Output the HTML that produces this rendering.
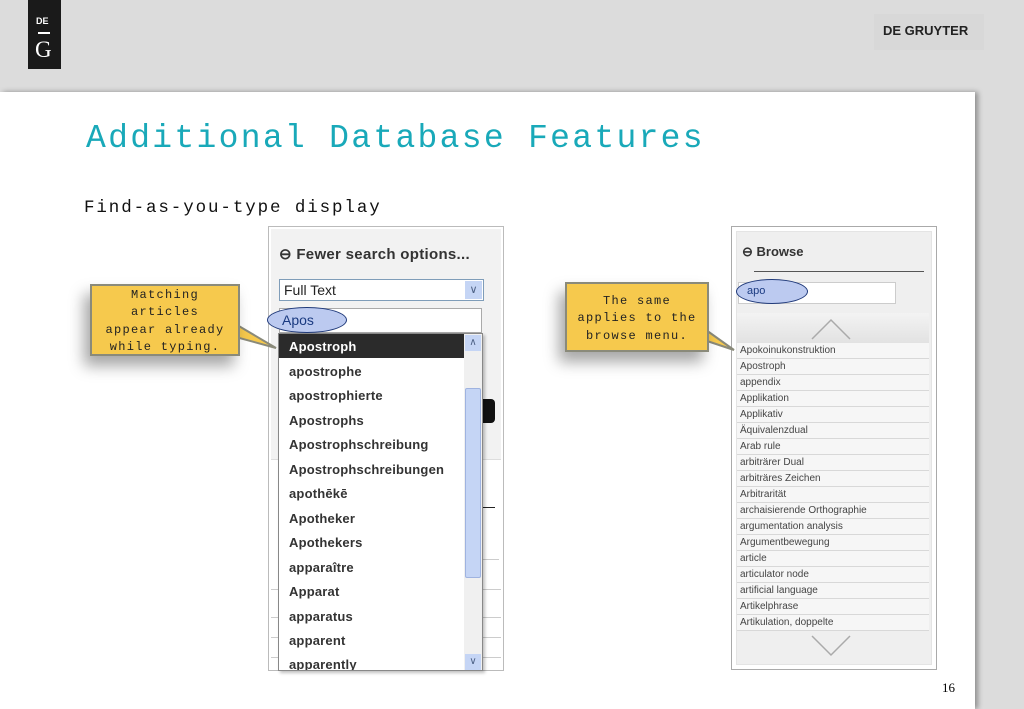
<!DOCTYPE html>
<html><head><meta charset="utf-8"><style>
*{margin:0;padding:0;box-sizing:border-box}
body{width:1024px;height:709px;background:#dcdcdc;position:relative;overflow:hidden;font-family:"Liberation Sans",sans-serif}
.abs{position:absolute}
.mono{font-family:"Liberation Mono","DejaVu Sans Mono",monospace}
.row{position:absolute;left:10px;font-weight:bold;font-size:13px;color:#333;letter-spacing:0.2px}
.br{position:absolute;left:0;width:192px;height:16px;border-bottom:1px solid #d8d8d8;font-size:10px;color:#444;padding-left:3px;line-height:15px;background:#f6f6f6}
.call{position:absolute;background:#f6c94d;border:2px solid #8a8a7a;font-size:12px;text-align:center;line-height:17.3px;color:#222;letter-spacing:1.3px;box-shadow:-6px 10px 14px rgba(0,0,0,.35)}
</style></head><body>
<div class="abs" style="left:28px;top:0;width:33px;height:69px;background:#1a1a1a;color:#fff">
<div style="position:absolute;left:8px;top:16px;font-size:9px;font-weight:bold">DE</div>
<div style="position:absolute;left:10px;top:32px;width:12px;height:2px;background:#fff"></div>
<div style="position:absolute;left:7px;top:37px;font-family:'Liberation Serif',serif;font-size:23px">G</div>
</div>
<div class="abs" style="left:874px;top:14px;width:110px;height:36px;background:#d8d8d8;font-weight:bold;font-size:13px;color:#222;line-height:34px;padding-left:9px">DE GRUYTER</div>
<div class="abs" style="left:0;top:92px;width:975px;height:617px;background:#fff;box-shadow:3px 0 5px rgba(0,0,0,.35)"></div>
<div class="abs mono" style="left:86px;top:120px;font-size:33px;color:#19a9b9;letter-spacing:2.3px">Additional Database Features</div>
<div class="abs mono" style="left:84px;top:198px;font-size:17.5px;color:#111;letter-spacing:1.9px">Find-as-you-type display</div>
<div class="abs" style="left:942px;top:680px;font-size:13px;font-family:'Liberation Serif',serif">16</div>

<!-- left screenshot -->
<div class="abs" style="left:268px;top:226px;width:236px;height:445px;border:1px solid #bbb;background:#fff">
<div class="abs" style="left:2px;top:2px;width:230px;height:230px;background:#f2f2f2"></div>
<div class="abs" style="left:10px;top:18px;font-size:15px;font-weight:bold;color:#333;letter-spacing:0.3px">⊖ Fewer search options...</div>
<div class="abs" style="left:10px;top:52px;width:205px;height:22px;border:1px solid #7f9db9;background:#fff;font-size:14px;padding:2px 4px;color:#222">Full Text
<div class="abs" style="right:1px;top:1px;width:17px;height:18px;background:#c5d5f5;color:#4d6185;font-size:11px;text-align:center;line-height:18px">&#x2228;</div></div>
<div class="abs" style="left:10px;top:81px;width:203px;height:25px;border:1px solid #aaa;background:#fff"></div>
<div class="abs" style="left:-2px;top:80px;width:80px;height:26px;border:1.5px solid #203a7a;border-radius:50%;background:#bccaf0;font-size:14px;color:#1a3a80;padding:4px 14px">Apos</div>
<div class="abs" style="left:200px;top:172px;width:26px;height:24px;background:#111;border-radius:4px"></div>
<div class="abs" style="left:2px;top:232px;width:230px;height:1px;background:#ddd"></div>
<div class="abs" style="left:200px;top:280px;width:26px;height:1px;background:#222"></div>
<div class="abs" style="left:200px;top:332px;width:30px;height:1px;background:#ccc"></div>
<div class="abs" style="left:2px;top:362px;width:230px;height:1px;background:#ccc"></div>
<div class="abs" style="left:2px;top:390px;width:230px;height:1px;background:#ccc"></div>
<div class="abs" style="left:2px;top:410px;width:230px;height:1px;background:#ccc"></div>
<div class="abs" style="left:2px;top:430px;width:230px;height:1px;background:#ccc"></div>
<div class="abs" style="left:9px;top:106px;width:205px;height:338px;background:#fff;border:1px solid #888;box-shadow:2px 2px 3px rgba(0,0,0,.25);overflow:hidden">
<div class="abs" style="left:0;top:0;width:185px;height:24px;background:#2b2b2b"></div>
<div class="row" style="top:5px;color:#fff">Apostroph</div>
<div class="row" style="top:30px">apostrophe</div>
<div class="row" style="top:54px">apostrophierte</div>
<div class="row" style="top:79px">Apostrophs</div>
<div class="row" style="top:103px">Apostrophschreibung</div>
<div class="row" style="top:128px">Apostrophschreibungen</div>
<div class="row" style="top:152px">apothēkē</div>
<div class="row" style="top:177px">Apotheker</div>
<div class="row" style="top:201px">Apothekers</div>
<div class="row" style="top:226px">apparaître</div>
<div class="row" style="top:250px">Apparat</div>
<div class="row" style="top:275px">apparatus</div>
<div class="row" style="top:299px">apparent</div>
<div class="row" style="top:323px">apparently</div>
<div class="abs" style="left:185px;top:0;width:18px;height:338px;background:#f0f0f0"></div>
<div class="abs" style="left:186px;top:1px;width:16px;height:16px;background:#c5d5f5;font-size:10px;color:#4d6185;text-align:center;line-height:16px">&#x2227;</div>
<div class="abs" style="left:186px;top:54px;width:16px;height:190px;background:#c5d5f5;border:1px solid #9fb3e0;border-radius:2px"></div>
<div class="abs" style="left:186px;top:320px;width:16px;height:16px;background:#c5d5f5;font-size:10px;color:#4d6185;text-align:center;line-height:16px">&#x2228;</div>
</div>
</div>

<!-- right screenshot -->
<div class="abs" style="left:731px;top:226px;width:206px;height:444px;border:1px solid #aaa;background:#fff">
<div class="abs" style="left:4px;top:4px;width:196px;height:434px;background:#efefef;border:1px solid #e4e4e4"></div>
<div class="abs" style="left:10px;top:17px;font-size:13px;font-weight:bold;color:#333">⊖ Browse</div>
<div class="abs" style="left:22px;top:44px;width:170px;height:1px;background:#555"></div>
<div class="abs" style="left:6px;top:55px;width:158px;height:22px;background:#fff;border:1px solid #ccc"></div>
<div class="abs" style="left:4px;top:52px;width:72px;height:25px;border:1.5px solid #203a7a;border-radius:50%;background:#bccaf0;font-size:11px;color:#1a3a80;padding:5px 10px">apo</div>
<div class="abs" style="left:5px;top:86px;width:192px;height:30px;background:linear-gradient(#f3f3f3,#e2e2e2)"></div>
<svg class="abs" style="left:78px;top:90px" width="42" height="24"><path d="M2 22 L21 3 L40 22" fill="none" stroke="#aaa" stroke-width="1.5"/></svg>
<div class="abs" style="left:5px;top:116px;width:192px;height:290px">
<div class="br" style="top:0">Apokoinukonstruktion</div>
<div class="br" style="top:16px">Apostroph</div>
<div class="br" style="top:32px">appendix</div>
<div class="br" style="top:48px">Applikation</div>
<div class="br" style="top:64px">Applikativ</div>
<div class="br" style="top:80px">Äquivalenzdual</div>
<div class="br" style="top:96px">Arab rule</div>
<div class="br" style="top:112px">arbiträrer Dual</div>
<div class="br" style="top:128px">arbiträres Zeichen</div>
<div class="br" style="top:144px">Arbitrarität</div>
<div class="br" style="top:160px">archaisierende Orthographie</div>
<div class="br" style="top:176px">argumentation analysis</div>
<div class="br" style="top:192px">Argumentbewegung</div>
<div class="br" style="top:208px">article</div>
<div class="br" style="top:224px">articulator node</div>
<div class="br" style="top:240px">artificial language</div>
<div class="br" style="top:256px">Artikelphrase</div>
<div class="br" style="top:272px">Artikulation, doppelte</div>
</div>
<svg class="abs" style="left:78px;top:407px" width="42" height="24"><path d="M2 2 L21 21 L40 2" fill="none" stroke="#aaa" stroke-width="1.5"/></svg>
</div>

<!-- callouts -->
<svg class="abs" style="left:230px;top:320px" width="50" height="32"><path d="M2 2 L46 28 L2 16 Z" fill="#f6c94d" stroke="#8a8a7a" stroke-width="2"/></svg>
<div class="call mono" style="left:90px;top:284px;width:150px;height:72px;padding-top:1px">Matching<br>articles<br>appear already<br>while typing.</div>
<svg class="abs" style="left:690px;top:318px" width="50" height="36"><path d="M2 2 L44 32 L2 18 Z" fill="#f6c94d" stroke="#8a8a7a" stroke-width="2"/></svg>
<div class="call mono" style="left:565px;top:282px;width:144px;height:70px;padding-top:9px">The same<br>applies to the<br>browse menu.</div>
</body></html>
